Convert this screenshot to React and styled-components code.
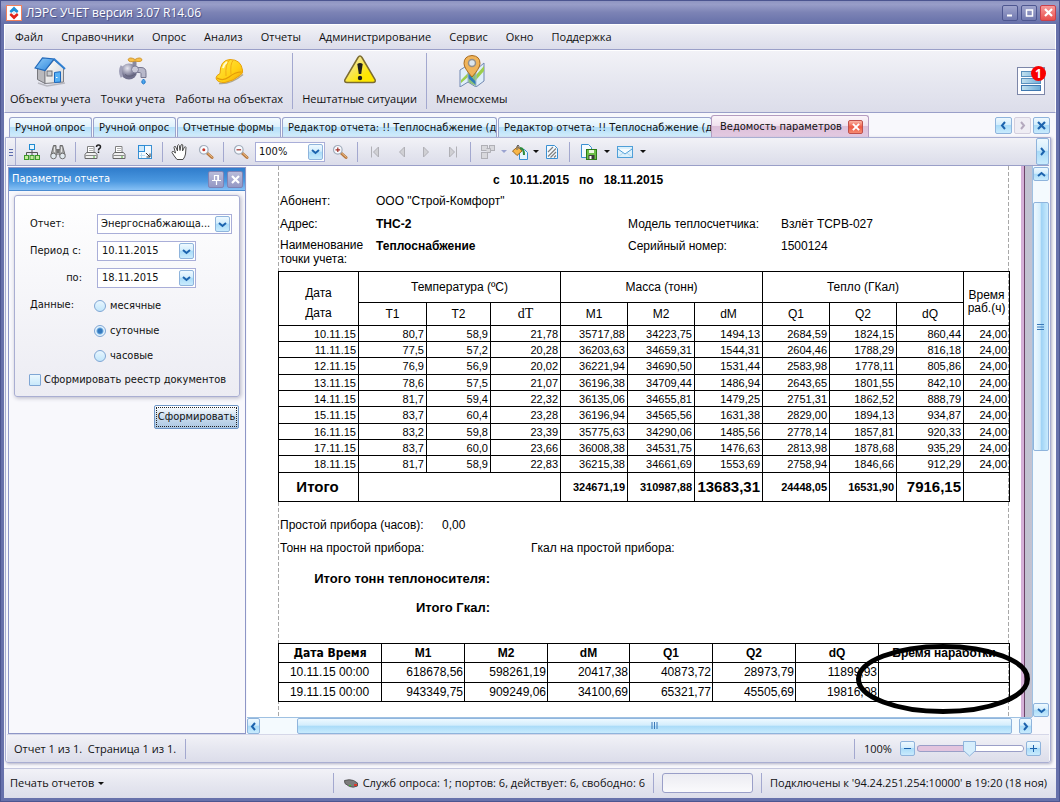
import React from "react";
import styled, { createGlobalStyle, css } from "styled-components";

const uiFont = `"Open Sans", "Noto Sans", sans-serif`;
const formFont = `"DejaVu Sans Condensed", "DejaVu Sans", sans-serif`;
const reportFont = `"Liberation Sans", Arial, sans-serif`;

const menu = [
  "Файл",
  "Справочники",
  "Опрос",
  "Анализ",
  "Отчеты",
  "Администрирование",
  "Сервис",
  "Окно",
  "Поддержка",
];

const tabs = [
  { text: "Ручной опрос", width: 83 },
  { text: "Ручной опрос", width: 83 },
  { text: "Отчетные формы", width: 104 },
  { text: "Редактор отчета: !! Теплоснабжение (д", width: 215 },
  { text: "Редактор отчета: !! Теплоснабжение (д", width: 214 },
];

const days = [
  ["10.11.15", "80,7", "58,9", "21,78", "35717,88", "34223,75", "1494,13", "2684,59", "1824,15", "860,44", "24,00"],
  ["11.11.15", "77,5", "57,2", "20,28", "36203,63", "34659,31", "1544,31", "2604,46", "1788,29", "816,18", "24,00"],
  ["12.11.15", "76,9", "56,9", "20,02", "36221,94", "34690,50", "1531,44", "2583,98", "1778,11", "805,86", "24,00"],
  ["13.11.15", "78,6", "57,5", "21,07", "36196,38", "34709,44", "1486,94", "2643,65", "1801,55", "842,10", "24,00"],
  ["14.11.15", "81,7", "59,4", "22,32", "36135,06", "34655,81", "1479,25", "2751,31", "1862,52", "888,79", "24,00"],
  ["15.11.15", "83,7", "60,4", "23,28", "36196,94", "34565,56", "1631,38", "2829,00", "1894,13", "934,87", "24,00"],
  ["16.11.15", "83,2", "59,8", "23,39", "35775,63", "34290,06", "1485,56", "2778,14", "1857,81", "920,33", "24,00"],
  ["17.11.15", "83,7", "60,0", "23,66", "36008,38", "34531,75", "1476,63", "2813,98", "1878,68", "935,29", "24,00"],
  ["18.11.15", "81,7", "58,9", "22,83", "36215,38", "34661,69", "1553,69", "2758,94", "1846,66", "912,29", "24,00"],
];

const counters = [
  ["10.11.15 00:00", "618678,56", "598261,19", "20417,38", "40873,72", "28973,79", "11899,93", ""],
  ["19.11.15 00:00", "943349,75", "909249,06", "34100,69", "65321,77", "45505,69", "19816,08", ""],
];

const dayCols = [80, 68, 64, 70, 67, 67, 68, 67, 67, 67, 46];
const counterCols = [103, 83, 83, 82, 83, 83, 83, 131];

/* ---------- icons ---------- */

const LogoIcon = () => (
  <svg width="16" height="16" viewBox="0 0 16 16">
    <rect x="0.5" y="0.5" width="15" height="15" fill="#fff" stroke="#f0805c" />
    <path d="M8 1.5 12.5 6 11 8 8 6 5 8 3.500 6z" fill="#1f8fd6" />
    <path d="M8 14.500 12.500 10 11 8 8 10.500 5 8 3.500 10z" fill="#e2231a" />
    <path d="M6 8 8 6.500 10 8 8 9.500z" fill="#dfe8f0" />
  </svg>
);

const HouseIcon = () => (
  <svg width="32" height="32" viewBox="0 0 32 32">
    <defs>
      <linearGradient id="wall" x1="0" y1="0" x2="1" y2="1">
        <stop offset="0" stopColor="#fff" />
        <stop offset="1" stopColor="#d4d4d4" />
      </linearGradient>
      <linearGradient id="roof" x1="0" y1="0" x2="1" y2="1">
        <stop offset="0" stopColor="#8fcbf8" />
        <stop offset="1" stopColor="#2f87dd" />
      </linearGradient>
    </defs>
    <path d="M4 28l9 3 18-3" stroke="#b8b8c0" strokeWidth="1.500" fill="none" />
    <path d="M3.500 13v11.500L11 28.500V14z" fill="#b9b9bd" stroke="#77777c" />
    <path d="M11 15.500L20 5l9.500 8V27L11 28.500z" fill="url(#wall)" stroke="#808086" />
    <path d="M1 13L8.500 3 20 4 11 15.500z" fill="url(#roof)" stroke="#2068ba" strokeWidth="1.200" />
    <path d="M20 4l11 10" stroke="#2f7fd2" strokeWidth="2" />
    <rect x="13" y="16" width="5" height="5" fill="#c8ccd0" stroke="#6e6e74" />
    <path d="M20.500 17.500l6-.8v10.300l-6 .5z" fill="#55b0f4" stroke="#1c68be" />
    <path d="M22 22.500h1.500" stroke="#fff" />
  </svg>
);

const TapIcon = () => (
  <svg width="32" height="32" viewBox="0 0 32 32">
    <defs>
      <radialGradient id="ball" cx="0.4" cy="0.3">
        <stop offset="0" stopColor="#e6e6f0" />
        <stop offset="1" stopColor="#70708c" />
      </radialGradient>
    </defs>
    <path d="M17.500 5v8" stroke="#8a8a9f" strokeWidth="4" />
    <path d="M18 12.500h6q5 0 5 5v5h-5v-4q0-1-2-1h-5z" fill="#b8b8ca" stroke="#77778f" />
    <circle cx="12" cy="16.500" r="8" fill="url(#ball)" />
    <path d="M5 11q-3 5 0 11" stroke="#a0a0b8" strokeWidth="3" fill="none" />
    <path d="M8 19.500q5 4 11-1" stroke="#62627a" fill="none" />
    <circle cx="18" cy="14.500" r="3.500" fill="#c9c9d8" stroke="#80809a" />
    <path d="M11 4.500q2-3 7 0 5-3 7 0 0 3-7 1.500-6 2-7-1.500z" fill="#f8c04a" stroke="#d09428" />
    <path d="M26.500 24q3.500 3.500 0 5-3.500-1.500 0-5z" fill="#4ba6ee" stroke="#2277c8" />
  </svg>
);

const HelmetIcon = () => (
  <svg width="32" height="32" viewBox="0 0 32 32">
    <defs>
      <linearGradient id="helmet" x1="0" y1="0" x2="1" y2="1">
        <stop offset="0" stopColor="#ffe94a" />
        <stop offset="0.600" stopColor="#ffd012" />
        <stop offset="1" stopColor="#f09a0a" />
      </linearGradient>
    </defs>
    <path d="M6 28.500q12 1 24-9" stroke="#b0a890" strokeWidth="1.500" fill="none" />
    <path
      d="M3 23q0-2.500 4-4.500Q7 5 17 4.500 28 4.500 29.500 15q1 3-2 5-7 6-15.500 7.500-8 .5-9-4.500z"
      fill="url(#helmet)"
      stroke="#e7a00c"
    />
    <path d="M4 23q6 3.500 12-1 6-5 12.500-5" stroke="#e39a08" strokeWidth="1.200" fill="none" />
    <path d="M13 21Q12 9 17 4.500M18 19.500Q17 9 20 5.500" stroke="#f2ac14" fill="none" />
    <path d="M10 13q1-4 4-6" stroke="#fffbd0" strokeWidth="2" fill="none" />
  </svg>
);

const WarningIcon = () => (
  <svg width="32" height="32" viewBox="0 0 32 32">
    <defs>
      <linearGradient id="warn" x1="0" y1="0" x2="1" y2="1">
        <stop offset="0.200" stopColor="#f3e6a0" />
        <stop offset="0.700" stopColor="#ffe800" />
      </linearGradient>
    </defs>
    <path
      d="M14 2.500q2-3 4 0l13 22q1 3-2 3H3q-3 0-2-3z"
      fill="url(#warn)"
      stroke="#7c6c30"
      strokeWidth="1.500"
    />
    <path d="M13.300 9q2.700-2 5.400 0l-1.500 10h-2.400z" fill="#1f1f1f" />
    <circle cx="16" cy="23" r="2.200" fill="#1f1f1f" />
  </svg>
);

const MapIcon = () => (
  <svg width="32" height="32" viewBox="0 0 32 32">
    <path d="M4 15l8-5 9 4 7-6v18l-8 6-8-5-8 5z" fill="#dfeefa" stroke="#7187b0" />
    <path d="M12 11v16l8 4V14z" fill="#8cc07a" />
    <path d="M5 25l7-7v4l-7 6zM20 20l8-9v5l-8 9z" fill="#9cce4c" />
    <path d="M12 18l8 9v3l-8-7z" fill="#2e7bb8" />
    <path d="M12 11v16M20 14v17" stroke="#9fb4d0" />
    <path d="M16 22Q8 13 8 8.500 8 1 16 0.500 24 1 24 8.500 24 13 16 22z" fill="#f0b45a" stroke="#a8691c" />
    <circle cx="16" cy="8" r="3.500" fill="#dce6ee" stroke="#94908c" strokeWidth="1.500" />
  </svg>
);

const NoticeIcon = () => (
  <svg width="28" height="28" viewBox="0 0 28 28">
    <defs>
      <linearGradient id="bar" x1="0" y1="0" x2="1" y2="0">
        <stop offset="0" stopColor="#c4e2ef" />
        <stop offset="1" stopColor="#6cabd8" />
      </linearGradient>
    </defs>
    <rect x="0.500" y="0.500" width="27" height="27" fill="#fdfdff" stroke="#7c86a8" />
    <rect x="4.500" y="4.500" width="19" height="5" fill="url(#bar)" stroke="#5a90bd" />
    <rect x="4.500" y="11.500" width="19" height="5" fill="url(#bar)" stroke="#5a90bd" />
    <rect x="4.500" y="18.500" width="19" height="5" fill="url(#bar)" stroke="#3f78b0" />
  </svg>
);

const Chevron = ({ dir = "down", color = "#1c63ae" }) => {
  const turn = { down: 0, left: 90, up: 180, right: 270 }[dir];
  return (
    <svg width="9" height="9" viewBox="0 0 9 9">
      <path
        d="M1 3l3.500 3L8 3"
        fill="none"
        stroke={color}
        strokeWidth="2"
        transform={`rotate(${turn} 4.500 4.500)`}
      />
    </svg>
  );
};

const Cross = ({ color = "#fff", size = 9 }) => (
  <svg width={size} height={size} viewBox="0 0 9 9">
    <path d="M1 1l7 7M8 1L1 8" stroke={color} strokeWidth="2.200" />
  </svg>
);

const PinIcon = () => (
  <svg width="9" height="11" viewBox="0 0 9 11">
    <path d="M2.500 1v5M6 1v5M2 1.500h5M0 6.500h9M4.500 7v4" stroke="#fff" strokeWidth="1.200" fill="none" />
    <path d="M5.500 1h1.500v5H5.500z" fill="#fff" />
  </svg>
);

const TreeIcon = () => (
  <svg width="16" height="16" viewBox="0 0 16 16">
    <path d="M8 6v3M2.500 11V8.500h11V11M8 8.500V11" stroke="#555" fill="none" />
    <rect x="5.500" y="0.500" width="5" height="5" fill="#e6f5fd" stroke="#1f8ad0" />
    <rect x="0.500" y="11.500" width="4" height="4" fill="#c4eb9c" stroke="#3c9a28" />
    <rect x="6" y="11.500" width="4" height="4" fill="#c4eb9c" stroke="#3c9a28" />
    <rect x="11.500" y="11.500" width="4" height="4" fill="#c4eb9c" stroke="#3c9a28" />
  </svg>
);

const BinocularsIcon = () => (
  <svg width="16" height="16" viewBox="0 0 16 16">
    <path d="M3.500 1.500h2.500v3l1 2.500v4H1z" fill="#a8a8a8" stroke="#6a6a6a" />
    <path d="M12.500 1.500H10v3L9 7v4h6z" fill="#a8a8a8" stroke="#6a6a6a" />
    <path d="M7 5h2v4H7z" fill="#777" />
    <path d="M4.500 3v5M11.500 3v5" stroke="#e4e4e4" />
    <circle cx="3.500" cy="12" r="2.800" fill="#e2eaf0" stroke="#707070" />
    <circle cx="12.500" cy="12" r="2.800" fill="#e2eaf0" stroke="#707070" />
  </svg>
);

const PrinterIcon = ({ ask }) => (
  <svg width={ask ? 18 : 14} height="16" viewBox={ask ? "0 0 18 16" : "0 0 14 16"}>
    <path d="M3.500 9V2.500h6.500V9" fill="#fff" stroke="#808080" />
    <path d="M5 4.500h4M5 6.500h4" stroke="#b4b4b4" />
    <path d="M2.500 8.500h9l1.500 2v4H1v-4z" fill="#f0f0f0" stroke="#666" />
    <path d="M1.500 11.500h11" stroke="#8a8a8a" />
    <path d="M9 13h2" stroke="#4caf30" />
    {ask && (
      <path
        d="M12.500 3q0-2 2-2t2 2q0 1-1 1.500t-1 2M14.500 7.500V9"
        stroke="#222"
        strokeWidth="1.500"
        fill="none"
      />
    )}
  </svg>
);

const PageSetupIcon = () => (
  <svg width="16" height="16" viewBox="0 0 16 16">
    <rect x="1.500" y="1.500" width="13" height="13" fill="#f3faff" stroke="#3a90d2" />
    <rect x="1.500" y="1.500" width="6" height="6" fill="#cfe9fa" stroke="#2b8cd6" />
    <path d="M3 11.500h5M4.500 9v5" stroke="#b8dcf2" fill="none" />
    <path d="M9 9l3.500 3.500M13 9.500V13H9.500" stroke="#333" fill="none" />
  </svg>
);

const HandIcon = () => (
  <svg width="18" height="18" viewBox="0 0 18 18">
    <path
      d="M6 16.500Q3 13 1 9.500q0-1.500 1.500-1L4.500 10 3 4.500q0-1.500 1.500-1L6.500 8 6.500 2.500q.8-1.700 1.800 0L9 7.500 10 2q1-1.200 1.800 0L11.500 8l2-4q1.200-.8 1.500.5L14.500 11q-.5 3-2.500 5.500z"
      fill="#fff"
      stroke="#4a4a4a"
    />
  </svg>
);

const LensIcon = ({ mark }) => (
  <svg width="16" height="16" viewBox="0 0 16 16">
    <path d="M9 9l5 4.500" stroke="#b8763c" strokeWidth="3" strokeLinecap="round" />
    <path d="M9.500 9l5 4.500" stroke="#eec48e" />
    <circle cx="5.800" cy="5.800" r="4.300" fill="#f8fbff" stroke="#a3aebc" strokeWidth="1.200" />
    {mark === "dot" && <circle cx="5.800" cy="5.800" r="1.500" fill="#c8382c" />}
    {mark === "minus" && <path d="M3.500 5.800h4.600" stroke="#a03028" strokeWidth="1.200" />}
    {mark === "plus" && (
      <path d="M3.500 5.800h4.600M5.800 3.500v4.600" stroke="#a03028" strokeWidth="1.200" />
    )}
  </svg>
);

const StepIcon = ({ back, end }) => (
  <svg width="10" height="12" viewBox="0 0 10 12">
    <g transform={back ? undefined : "matrix(-1 0 0 1 10 0)"}>
      <path d="M8.500 1v10L3.500 6z" fill="#d0d0d4" stroke="#b0b0b6" />
      {end && <path d="M1.500 0.500v11" stroke="#b0b0b6" />}
    </g>
  </svg>
);

const AlignIcon = () => (
  <svg width="14" height="16" viewBox="0 0 14 16">
    <g fill="#d8d8dc" stroke="#b0b0b6">
      <rect x="0.500" y="1.500" width="6" height="5" />
      <rect x="8.500" y="1.500" width="5" height="5" />
      <rect x="0.500" y="8.500" width="6" height="6" />
      <path d="M5.500 4.500h4v4h-4" />
    </g>
  </svg>
);

const FillIcon = () => (
  <svg width="16" height="16" viewBox="0 0 16 16">
    <path d="M7.500 5.500h5l3 3v7h-8z" fill="#e8f5fd" stroke="#3a90d2" />
    <path d="M0.500 7l5.500-4.500L10 7l-5 4.500z" fill="#f7b648" stroke="#9a6820" />
    <path d="M5 6V2q1-2 2 0v3" stroke="#666" fill="none" />
    <path d="M8 4q4 0 4 7" stroke="#2e8b3d" strokeWidth="2" fill="none" />
  </svg>
);

const HatchIcon = () => (
  <svg width="14" height="16" viewBox="0 0 14 16">
    <path d="M1.500 1.500h8l3 3v10h-11z" fill="#f4faff" stroke="#3a90d2" />
    <path d="M3 8l5-5M3 12.500l8-8M5.500 13.500L11 8M9 13.500l2-2" stroke="#808080" strokeWidth="1.200" />
  </svg>
);

const SaveIcon = () => (
  <svg width="18" height="18" viewBox="0 0 18 18">
    <path d="M1.500 1.500h7l3 3v10h-10z" fill="#f3faff" stroke="#3a90d2" />
    <rect x="6.500" y="6.500" width="10" height="10" fill="#6cbf48" stroke="#2c7a18" />
    <rect x="9" y="7" width="5" height="3" fill="#eaf8e0" />
    <rect x="8.500" y="12" width="6" height="4" fill="#3c3c3c" />
    <rect x="9.500" y="13" width="2" height="3" fill="#fff" />
  </svg>
);

const MailIcon = () => (
  <svg width="16" height="12" viewBox="0 0 16 12">
    <rect x="0.500" y="0.500" width="15" height="11" fill="#dcf0fb" stroke="#4f9fd8" />
    <path d="M1 3l7 5 7-5" stroke="#4f9fd8" fill="#f6fcff" />
    <path d="M1 11l5-4M15 11l-5-4" stroke="#b4d8ee" />
  </svg>
);

const DeviceIcon = () => (
  <svg width="14" height="9" viewBox="0 0 14 9">
    <path d="M0.500 1.500q5-1.500 9 0L13.500 4v3q-4 2-8 0.500L1 4.500z" fill="#7c7c7c" stroke="#555" />
    <rect x="5" y="6" width="2" height="1" fill="#38c030" />
    <rect x="10" y="5" width="3" height="2" fill="#e0382a" />
  </svg>
);

const Ellipse = () => (
  <svg width="176" height="72" viewBox="0 0 176 72">
    <ellipse cx="88" cy="36" rx="84.500" ry="32.500" fill="none" stroke="#000" strokeWidth="5" />
  </svg>
);

/* ---------- page ---------- */

const Combo = ({ id, width, children }) => (
  <ComboBox $width={width}>
    <select id={id} aria-label={id}>
      <option>{children}</option>
    </select>
    <ComboArrow>
      <Chevron />
    </ComboArrow>
  </ComboBox>
);

const ParamsPanel = () => (
  <Panel>
    <PanelHead>
      <h2>Параметры отчета</h2>
      <HeadButton type="button" aria-label="Закрепить">
        <PinIcon />
      </HeadButton>
      <HeadButton type="button" aria-label="Закрыть">
        <Cross />
      </HeadButton>
    </PanelHead>
    <PanelBody>
      <Group>
        <Fields>
          <label htmlFor="report">Отчет:</label>
          <Combo id="report">Энергоснабжающа...</Combo>
          <label htmlFor="from">Период с:</label>
          <DateBox>
            <input id="from" type="text" defaultValue="10.11.2015" />
            <button type="button" aria-label="Выбрать дату">
              <Chevron />
            </button>
          </DateBox>
          <EndLabel htmlFor="to">по:</EndLabel>
          <DateBox>
            <input id="to" type="text" defaultValue="18.11.2015" />
            <button type="button" aria-label="Выбрать дату">
              <Chevron />
            </button>
          </DateBox>
          <TopLabel>Данные:</TopLabel>
          <Radios>
            <label>
              <input type="radio" name="data" /> месячные
            </label>
            <label>
              <input type="radio" name="data" defaultChecked /> суточные
            </label>
            <label>
              <input type="radio" name="data" /> часовые
            </label>
          </Radios>
        </Fields>
        <Check>
          <input type="checkbox" /> Сформировать реестр документов
        </Check>
      </Group>
      <Submit type="button">
        <span>Сформировать</span>
      </Submit>
    </PanelBody>
  </Panel>
);

const ReportToolbar = () => (
  <ToolStrip>
    <Grip />
    <Tools>
      <Tool aria-label="Структура"><TreeIcon /></Tool>
      <Tool aria-label="Найти"><BinocularsIcon /></Tool>
      <Divider />
      <Tool aria-label="Печать с настройкой"><PrinterIcon ask /></Tool>
      <Tool aria-label="Печать"><PrinterIcon /></Tool>
      <Tool aria-label="Параметры страницы"><PageSetupIcon /></Tool>
      <Divider />
      <Tool aria-label="Перемещение"><HandIcon /></Tool>
      <Tool aria-label="Масштаб"><LensIcon mark="dot" /></Tool>
      <Divider />
      <Tool aria-label="Уменьшить"><LensIcon mark="minus" /></Tool>
      <Combo id="scale" width={70}>100%</Combo>
      <Tool aria-label="Увеличить"><LensIcon mark="plus" /></Tool>
      <Divider />
      <Tool aria-label="Первая"><StepIcon back end /></Tool>
      <Tool aria-label="Предыдущая"><StepIcon back /></Tool>
      <Tool aria-label="Следующая"><StepIcon /></Tool>
      <Tool aria-label="Последняя"><StepIcon end /></Tool>
      <Divider />
      <Tool aria-label="Поля"><AlignIcon /></Tool>
      <Drop $off />
      <Tool aria-label="Цвет"><FillIcon /></Tool>
      <Drop />
      <Tool aria-label="Водяной знак"><HatchIcon /></Tool>
      <Divider />
      <Tool aria-label="Сохранить" $wide><SaveIcon /></Tool>
      <Drop />
      <Tool aria-label="Отправить" $wide><MailIcon /></Tool>
      <Drop />
    </Tools>
    <MoreButton type="button" aria-label="Еще">
      <Chevron dir="right" />
    </MoreButton>
  </ToolStrip>
);

const Report = () => (
  <Sheet>
    <Period>с&nbsp;&nbsp; 10.11.2015 &nbsp;&nbsp;по&nbsp;&nbsp; 18.11.2015</Period>
    <Info>
      <span>Абонент:</span>
      <span>ООО "Строй-Комфорт"</span>
      <i />
      <i />
      <span>Адрес:</span>
      <b>ТНС-2</b>
      <span>Модель теплосчетчика:</span>
      <span>Взлёт ТСРВ-027</span>
      <TwoLines>
        Наименование
        <br />
        точки учета:
      </TwoLines>
      <b>Теплоснабжение</b>
      <span>Серийный номер:</span>
      <span>1500124</span>
    </Info>
    <DayTable>
      <colgroup>
        {dayCols.map((w, i) => (
          <col key={i} width={w} />
        ))}
      </colgroup>
      <thead>
        <tr>
          <DateHead rowSpan="2">
            Дата
            <br />
            Дата
          </DateHead>
          <th colSpan="3">Температура (ºC)</th>
          <th colSpan="3">Масса (тонн)</th>
          <th colSpan="3">Тепло (ГКал)</th>
          <HoursHead rowSpan="2">
            Время
            <br />
            раб.(ч)
          </HoursHead>
        </tr>
        <tr>
          <th>T1</th>
          <th>T2</th>
          <SerifHead>dT</SerifHead>
          <th>M1</th>
          <th>M2</th>
          <th>dM</th>
          <th>Q1</th>
          <th>Q2</th>
          <th>dQ</th>
        </tr>
      </thead>
      <tbody>
        {days.map((row) => (
          <tr key={row[0]}>
            {row.map((cell, i) => (
              <td key={i}>{cell}</td>
            ))}
          </tr>
        ))}
      </tbody>
      <tfoot>
        <tr>
          <Total $big $center>Итого</Total>
          <Total colSpan="3" />
          <Total>324671,19</Total>
          <Total>310987,88</Total>
          <Total $big>13683,31</Total>
          <Total>24448,05</Total>
          <Total>16531,90</Total>
          <Total $big>7916,15</Total>
          <Total />
        </tr>
      </tfoot>
    </DayTable>
    <Idle>
      <IdleName>Простой прибора (часов):</IdleName>
      <span>0,00</span>
    </Idle>
    <Idle>
      <IdleName $wide>Тонн на простой прибора:</IdleName>
      <span>Гкал на простой прибора:</span>
    </Idle>
    <Sums>
      <p>Итого тонн теплоносителя:</p>
      <p>Итого Гкал:</p>
    </Sums>
    <CounterWrap>
      <CounterTable>
        <colgroup>
          {counterCols.map((w, i) => (
            <col key={i} width={w} />
          ))}
        </colgroup>
        <thead>
          <tr>
            <FormHead>Дата Время</FormHead>
            <th>M1</th>
            <th>M2</th>
            <th>dM</th>
            <th>Q1</th>
            <th>Q2</th>
            <th>dQ</th>
            <th>Время наработки</th>
          </tr>
        </thead>
        <tbody>
          {counters.map((row) => (
            <tr key={row[0]}>
              {row.map((cell, i) => (
                <td key={i}>{cell}</td>
              ))}
            </tr>
          ))}
        </tbody>
      </CounterTable>
      <Mark>
        <Ellipse />
      </Mark>
    </CounterWrap>
  </Sheet>
);

const App = () => {
  return (
    <>
      <Global />
      <Frame>
        <TitleBar>
          <LogoIcon />
          <h1>ЛЭРС УЧЕТ версия 3.07 R14.06</h1>
          <WinButton type="button" aria-label="Свернуть">
            <svg width="9" height="9"><path d="M1 7.500h5" stroke="#fff" strokeWidth="2" /></svg>
          </WinButton>
          <WinButton type="button" aria-label="Развернуть">
            <svg width="9" height="9">
              <path d="M1.500 2v6h6V2zM1 2h7" fill="none" stroke="#fff" strokeWidth="1.500" />
            </svg>
          </WinButton>
          <WinButton type="button" aria-label="Закрыть" $close>
            <Cross />
          </WinButton>
        </TitleBar>
        <Inner>
          <MenuBar>
            {menu.map((item) => (
              <a href="#" key={item}>
                {item}
              </a>
            ))}
          </MenuBar>
          <MainBar>
            <BigTool type="button"><HouseIcon />Объекты учета</BigTool>
            <BigTool type="button"><TapIcon />Точки учета</BigTool>
            <BigTool type="button"><HelmetIcon />Работы на объектах</BigTool>
            <BigDivider />
            <BigTool type="button"><WarningIcon />Нештатные ситуации</BigTool>
            <BigDivider />
            <BigTool type="button"><MapIcon />Мнемосхемы</BigTool>
            <Notice type="button" aria-label="Уведомления">
              <NoticeIcon />
              <Badge>1</Badge>
            </Notice>
          </MainBar>
          <TabBar>
            {tabs.map((tab, i) => (
              <Tab type="button" key={i} $width={tab.width}>
                <span>{tab.text}</span>
              </Tab>
            ))}
            <ActiveTab>
              <button type="button">Ведомость параметров</button>
              <TabClose type="button" aria-label="Закрыть вкладку">
                <Cross size={8} />
              </TabClose>
            </ActiveTab>
            <TabNav>
              <NavButton type="button" aria-label="Назад"><Chevron dir="left" /></NavButton>
              <NavButton type="button" aria-label="Вперед" disabled>
                <Chevron dir="right" color="#b4a9be" />
              </NavButton>
              <NavButton type="button" aria-label="Закрыть"><Cross color="#1c63ae" /></NavButton>
            </TabNav>
          </TabBar>
          <Doc>
            <ReportToolbar />
            <Work>
              <ParamsPanel />
              <Viewer>
                <Canvas>
                  <Paper>
                    <Report />
                  </Paper>
                </Canvas>
                <VScroll>
                  <ArrowUp type="button" aria-label="Вверх"><Chevron dir="up" /></ArrowUp>
                  <VGap />
                  <VThumb>
                    <svg width="8" height="8">
                      <path d="M0 1.500h7M0 4h7M0 6.500h7" stroke="#3a78b8" />
                    </svg>
                  </VThumb>
                  <VRest />
                  <ArrowUp type="button" aria-label="Вниз"><Chevron /></ArrowUp>
                </VScroll>
                <HScroll>
                  <ArrowSide type="button" aria-label="Влево"><Chevron dir="left" /></ArrowSide>
                  <HGap $width={37} />
                  <HThumb>
                    <svg width="7" height="8">
                      <path d="M1 0v7M3.500 0v7M6 0v7" stroke="#3a78b8" />
                    </svg>
                  </HThumb>
                  <HGap $width={7} />
                  <ArrowSide type="button" aria-label="Вправо"><Chevron dir="right" /></ArrowSide>
                </HScroll>
              </Viewer>
            </Work>
            <PageStatus>
              <PageInfo>Отчет 1 из 1.&nbsp; Страница 1 из 1.</PageInfo>
              <StatusDivider />
              <Spacer />
              <StatusDivider />
              <label htmlFor="zoom">100%</label>
              <SquareButton type="button" aria-label="Меньше">
                <svg width="9" height="9"><path d="M1 4.500h7" stroke="#1c63ae" /></svg>
              </SquareButton>
              <Slider id="zoom" type="range" min="0" max="100" defaultValue="49" />
              <SquareButton type="button" aria-label="Больше">
                <svg width="9" height="9"><path d="M1 4.500h7M4.500 1v7" stroke="#1c63ae" /></svg>
              </SquareButton>
            </PageStatus>
          </Doc>
          <Status>
            <PrintButton type="button">
              Печать отчетов <Drop as="i" />
            </PrintButton>
            <Spacer />
            <StatusDivider />
            <Poll>
              <DeviceIcon />
              Служб опроса: 1; портов: 6, действует: 6, свободно: 6
            </Poll>
            <StatusDivider />
            <Progress />
            <StatusDivider />
            <span>Подключены к '94.24.251.254:10000' в 19:20 (18 ноя)</span>
          </Status>
        </Inner>
      </Frame>
    </>
  );
};

export default App;

/* ---------- styles ---------- */

const Global = createGlobalStyle`
  * {
    box-sizing: border-box;
  }

  body {
    margin: 0;
    font: 11px/16px ${uiFont};
    color: #111;
  }

  button, input, select {
    font: inherit;
    color: inherit;
    margin: 0;
    padding: 0;
  }

  svg {
    display: block;
    flex: none;
  }
`;

const silver = css`
  background: linear-gradient(#f2f2f7, #e6e7f0 50%, #dcddea);
`;

const glass = css`
  background: linear-gradient(#eef9ff, #d3edfc 45%, #a9dbf8 50%, #c9ebfd);
  border: 1px solid #8fb4dc;
  border-radius: 2px;
  display: flex;
  align-items: center;
  justify-content: center;
`;

const Frame = styled.div`
  min-height: 100vh;
  display: flex;
  flex-direction: column;
  padding: 0 4px 4px;
  background: #6771ab;
  border: 1px solid #4c5590;
`;

const TitleBar = styled.header`
  height: 23px;
  margin: 0 -4px;
  padding: 0 3px 0 5px;
  display: flex;
  align-items: center;
  gap: 3px;
  background: linear-gradient(#8f95c1, #989dc8 15%, #7c83b5 50%, #6670a9);

  h1 {
    flex: 1;
    margin: 0 0 0 1px;
    font: 12px/18px ${uiFont};
    color: #fff;
    text-shadow: 1px 1px 1px #444c84;
  }
`;

const WinButton = styled.button`
  width: 16px;
  height: 16px;
  display: flex;
  align-items: center;
  justify-content: center;
  border: 1px solid ${(p) => (p.$close ? "#c9404c" : "#4d5690")};
  border-radius: 2px;
  background: ${(p) =>
    p.$close ? "linear-gradient(#f79a9a, #e8504c)" : "linear-gradient(#a0a5cd, #7179b0)"};
`;

const Inner = styled.div`
  flex: 1;
  display: flex;
  flex-direction: column;
  margin: 0 -1px -1px;
  background: #f8f8fc;
`;

const MenuBar = styled.nav`
  ${silver}
  height: 26px;
  display: flex;
  align-items: center;
  gap: 18px;
  padding: 0 10px;
  border: 1px solid #fff;
  border-bottom-color: #9a9fc8;

  a {
    color: inherit;
    text-decoration: none;
  }
`;

const MainBar = styled.div`
  ${silver}
  height: 63px;
  display: flex;
  align-items: stretch;
  gap: 10px;
  padding: 2px 10px 3px 5px;
  border: 1px solid #fff;
  border-bottom-color: #9a9fc8;
`;

const BigTool = styled.button`
  border: 0;
  background: none;
  display: flex;
  flex-direction: column;
  align-items: center;
  gap: 4px;
  padding-top: 2px;
  white-space: nowrap;
`;

const BigDivider = styled.i`
  width: 1px;
  margin: 0 -1px;
  background: #a3a8cf;
`;

const Notice = styled.button`
  position: relative;
  align-self: center;
  margin-left: auto;
  border: 0;
  background: none;
`;

const Badge = styled.span`
  position: absolute;
  top: -1px;
  right: -1px;
  width: 15px;
  height: 15px;
  border-radius: 50%;
  background: #f80000;
  color: #fff;
  font: bold 12px/15px ${uiFont};
  text-align: center;
`;

const TabBar = styled.div`
  height: 24px;
  display: flex;
  align-items: flex-end;
  gap: 1px;
  padding: 0 6px 0 5px;
  font: 11px/16px ${formFont};
`;

const Tab = styled.button`
  width: ${(p) => p.$width}px;
  height: 20px;
  padding: 0 0 0 5px;
  border: 1px solid #9aa3cc;
  border-bottom: 0;
  border-radius: 3px 3px 0 0;
  background: linear-gradient(#f4fbff, #dff2fd 45%, #b4dff8 50%, #d4eefc);

  span {
    display: block;
    overflow: hidden;
    white-space: nowrap;
    text-align: left;
  }
`;

const ActiveTab = styled.div`
  width: 158px;
  height: 22px;
  margin-left: -2px;
  padding: 0 5px 0 8px;
  display: flex;
  align-items: center;
  justify-content: space-between;
  border: 1px solid #b59cc0;
  border-bottom: 0;
  border-radius: 3px 3px 0 0;
  background: linear-gradient(#fbf5fa, #f1e2ef 45%, #dcbfd9 50%, #e4cbe2);

  > button:first-child {
    border: 0;
    background: none;
    white-space: nowrap;
  }
`;

const TabClose = styled.button`
  width: 15px;
  height: 14px;
  display: flex;
  align-items: center;
  justify-content: center;
  border: 1px solid #c0504c;
  border-radius: 2px;
  background: linear-gradient(#fbb4a4, #ee5a44 50%, #f68a70);
`;

const TabNav = styled.div`
  margin-left: auto;
  align-self: center;
  display: flex;
  gap: 2px;
`;

const NavButton = styled.button`
  ${glass}
  width: 17px;
  height: 17px;

  &:disabled {
    background: #efedf4;
    border-color: #d3cfde;
  }
`;

const Doc = styled.main`
  flex: 1;
  display: flex;
  flex-direction: column;
  margin: 0 5px 0 1px;
  border: 1px solid #a9aed2;
  border-radius: 0 0 3px 3px;
  box-shadow: 1px 1px 3px #b0b0c4;
  padding: 0 1px;
`;

const ToolStrip = styled.div`
  ${silver}
  height: 28px;
  display: flex;
  align-items: stretch;
  border-bottom: 1px solid #9a9fc8;
`;

const Grip = styled.i`
  width: 9px;
  background: repeating-linear-gradient(#5c6cae 0 1px, transparent 1px 3px) 2px 11px / 4px 7px
    no-repeat;
  border-right: 1px solid #a9aed2;
`;

const Tools = styled.div`
  flex: 1;
  display: flex;
  align-items: center;
  padding-left: 3px;

  select {
    padding-left: 4px;
  }
`;

const Tool = styled.button.attrs({ type: "button" })`
  width: ${(p) => (p.$wide ? 30 : 26)}px;
  height: 22px;
  border: 0;
  background: none;
  display: flex;
  align-items: center;
  justify-content: center;
`;

const Divider = styled.i`
  width: 1px;
  height: 20px;
  margin: 0 4px;
  background: #a3a8cf;
`;

const Drop = styled.i`
  display: inline-block;
  border: 3px solid transparent;
  border-top-color: ${(p) => (p.$off ? "#9aa3d0" : "#111")};
  border-bottom: 0;
`;

const MoreButton = styled.button`
  ${glass}
  width: 13px;
`;

const ComboBox = styled.span`
  position: relative;
  width: ${(p) => (p.$width ? `${p.$width}px` : "auto")};
  height: 20px;
  display: flex;
  border: 1px solid #a9aed8;
  background: #fff;

  ${Tools} > & {
    margin: 0 2px 0 1px;
  }

  select {
    flex: 1;
    min-width: 0;
    padding: 0 18px 0 3px;
    border: 0;
    outline: 0;
    background: none;
    appearance: none;
    font: 11px/18px ${formFont};
  }
`;

const ComboArrow = styled.i`
  ${glass}
  position: absolute;
  top: 1px;
  right: 1px;
  width: 15px;
  height: 16px;
  pointer-events: none;
`;

const DateBox = styled.span`
  width: 99px;
  height: 20px;
  display: flex;
  border: 1px solid #a9aed8;
  background: #fff;
  padding: 1px;

  input {
    flex: 1;
    min-width: 0;
    padding: 0 3px;
    border: 0;
    background: none;
  }

  button {
    ${glass}
    width: 15px;
  }
`;

const Work = styled.div`
  flex: 1;
  display: flex;
`;

const Panel = styled.aside`
  width: 238px;
  margin: 1px 1px 0;
  border: 1px solid #8e96c6;
  font: 11px/16px ${formFont};
`;

const PanelHead = styled.header`
  height: 23px;
  display: flex;
  align-items: center;
  gap: 3px;
  padding: 0 2px 0 3px;
  background: linear-gradient(#2f7ccb, #4b98e0 60%, #86c0f5);
  border-bottom: 1px solid #4a8bd0;

  h2 {
    flex: 1;
    margin: 0;
    font: inherit;
    color: #fff;
  }
`;

const HeadButton = styled.button`
  width: 16px;
  height: 17px;
  display: flex;
  align-items: center;
  justify-content: center;
  border: 1px solid #7f83b5;
  border-radius: 2px;
  background: linear-gradient(#b9bbd9, #9598c4);
`;

const PanelBody = styled.div`
  padding: 4px 5px;
  display: flex;
  flex-direction: column;
  align-items: flex-end;
`;

const Group = styled.div`
  width: 100%;
  height: 202px;
  padding: 18px 7px 0 15px;
  border: 1px solid #a9aed2;
  border-radius: 3px;
  background: linear-gradient(#fff, #ececf3);
  box-shadow: 1px 1px 4px #b4b4c4;
`;

const Fields = styled.div`
  display: grid;
  grid-template-columns: 52px 1fr;
  gap: 7px 15px;
  align-items: center;

  > label {
    white-space: nowrap;
  }
`;

const EndLabel = styled.label`
  text-align: right;
`;

const TopLabel = styled.span`
  align-self: start;
  padding-top: 2px;
`;

const Radios = styled.div`
  display: grid;
  gap: 9px;
  margin-left: -3px;
  padding-top: 3px;

  label {
    display: flex;
    align-items: center;
    gap: 4px;
  }

  input {
    appearance: none;
    width: 12px;
    height: 12px;
    border: 1px solid #7fa6d4;
    border-radius: 50%;
    background: linear-gradient(#e8f6fe, #c2e6fb);
  }

  input:checked {
    background: radial-gradient(circle, #3378bd 0 2px, #6ea9de 3px, #e4f4fe 4px);
  }
`;

const Check = styled.label`
  display: flex;
  align-items: center;
  gap: 3px;
  margin: 8px 0 0 -1px;
  white-space: nowrap;

  input {
    appearance: none;
    width: 12px;
    height: 12px;
    border: 1px solid #7fa6d4;
    border-radius: 1px;
    background: linear-gradient(#eaf7fe, #c9e9fb);
  }
`;

const Submit = styled.button`
  ${glass}
  width: 85px;
  height: 24px;
  margin: 8px 1px 0 0;
  padding: 1px;
  border-color: #6f97c8;
  background: linear-gradient(#fff, #cfe0f0 45%, #aac6e2);

  span {
    flex: 1;
    height: 100%;
    line-height: 18px;
    border: 1px dotted #222;
  }
`;

const Viewer = styled.section`
  flex: 1;
  min-width: 0;
  display: grid;
  grid-template: 1fr 17px / 1fr 17px;
`;

const Canvas = styled.div`
  min-width: 0;
  padding-right: 8px;
  background: linear-gradient(90deg, #b9b9c8 0 95%, #c3c3d2);
`;

const Paper = styled.div`
  height: 100%;
  padding: 0 12px 0 31px;
  background: #fff;
  border-right: 3px solid #d5b0d8;
  box-shadow: 1px 0 #6c4468;
`;

const Sheet = styled.article`
  --dash: repeating-linear-gradient(#a8a8a8 0 4px, #fff 4px 6px);
  height: 100%;
  padding: 6px 0 12px;
  background: var(--dash) left / 1px 100% no-repeat, var(--dash) right / 1px 100% no-repeat;
  font: 12px/16px ${reportFont};
  color: #000;
`;

const Period = styled.p`
  margin: 0 0 5px;
  padding-left: 215px;
  font-weight: bold;
`;

const Info = styled.div`
  display: grid;
  grid-template: 23px 22px 33px / 96px 252px 153px 1fr;
  padding-left: 2px;
  white-space: nowrap;
`;

const TwoLines = styled.span`
  line-height: 14px;
`;

const gridTable = css`
  width: 100%;
  table-layout: fixed;
  border-collapse: collapse;
  white-space: nowrap;

  th,
  td {
    padding: 0;
    border: 1px solid #000;
  }
`;

const DayTable = styled.table`
  ${gridTable}

  th {
    font-weight: normal;
    line-height: 20px;
  }

  thead tr:first-child {
    height: 31px;
  }

  thead tr:last-child {
    height: 23px;
  }

  tbody tr {
    height: 16px;
  }

  tbody tr:nth-child(3n) {
    height: 17px;
  }

  td {
    padding-right: 2px;
    text-align: right;
    font-size: 11px;
    line-height: 14px;
  }

  tfoot tr {
    height: 29px;
  }
`;

const DateHead = styled.th`
  && {
    padding-top: 8px;
  }
`;

const HoursHead = styled.th`
  && {
    line-height: 13px;
    padding-top: 6px;
  }
`;

const SerifHead = styled.th`
  font: 14px "Liberation Serif", serif;
`;

const Total = styled.td`
  && {
    font-weight: bold;
    font-size: ${(p) => (p.$big ? 15 : 11)}px;
    text-align: ${(p) => (p.$center ? "center" : "right")};
  }
`;

const Idle = styled.div`
  display: flex;
  padding-left: 2px;
  line-height: 23px;

  ${DayTable} + & {
    margin-top: 12px;
  }
`;

const IdleName = styled.span`
  width: ${(p) => (p.$wide ? 251 : 162)}px;
`;

const Sums = styled.div`
  width: 212px;
  padding: 4px 0 21px;
  text-align: right;
  font-weight: bold;
  font-size: 13px;
  line-height: 29px;
  white-space: nowrap;

  p {
    margin: 0;
  }
`;

const CounterWrap = styled.div`
  position: relative;
`;

const CounterTable = styled.table`
  ${gridTable}

  tr {
    height: 20px;
  }

  thead tr,
  tr:last-child {
    height: 19px;
  }

  th,
  td {
    line-height: 17px;
  }

  td {
    padding-right: 1px;
    text-align: right;
  }

  td:first-child {
    text-align: center;
  }
`;

const FormHead = styled.th`
  font: bold 12px ${formFont};
`;

const Mark = styled.div`
  position: absolute;
  top: 0;
  right: -22px;
`;

const VScroll = styled.div`
  display: flex;
  flex-direction: column;
  padding-top: 1px;
  background: #f4fafe;
  border-left: 1px solid #9fc1e2;
`;

const ArrowUp = styled.button`
  ${glass}
  height: 14px;
`;

const VGap = styled.i`
  height: 21px;
`;

const VThumb = styled.div`
  ${glass}
  flex: 248;
  background: linear-gradient(90deg, #eef9ff, #d3edfc 45%, #9dd2f5 50%, #c9ebfd);
`;

const VRest = styled.i`
  flex: 253;
`;

const HScroll = styled.div`
  display: flex;
  border-top: 1px solid #9fc1e2;
  background: #f4fafe;
`;

const ArrowSide = styled.button`
  ${glass}
  width: 13px;
`;

const HGap = styled.i`
  width: ${(p) => p.$width}px;
`;

const HThumb = styled.div`
  ${glass}
  flex: 1;
`;

const PageStatus = styled.footer`
  ${silver}
  height: 28px;
  display: flex;
  align-items: center;
  padding: 0 8px 0 7px;
  border-top: 1px solid #d5d7e8;

  label {
    width: 36px;
    margin-left: 9px;
  }
`;

const PageInfo = styled.span`
  padding-right: 9px;
`;

const StatusDivider = styled.i`
  width: 1px;
  height: 20px;
  background: #a3a8cf;
`;

const Spacer = styled.i`
  flex: 1;
`;

const SquareButton = styled.button`
  ${glass}
  width: 15px;
  height: 15px;
`;

const Slider = styled.input`
  appearance: none;
  width: 107px;
  height: 18px;
  margin: 0 2px;
  background: linear-gradient(90deg, #e2c4de 50%, #fff 50%) center / 100% 5px no-repeat;

  &::-webkit-slider-runnable-track {
    height: 7px;
    border: 1px solid #9a9fc8;
    border-radius: 3px;
  }

  &::-webkit-slider-thumb {
    appearance: none;
    width: 13px;
    height: 17px;
    margin-top: -6px;
    background: url("data:image/svg+xml,%3Csvg xmlns='http://www.w3.org/2000/svg' width='13' height='17'%3E%3Cpath d='M.5 1.500h12v9l-6 5.500-6-5.500z' fill='%23d6eefc' stroke='%238fb4dc'/%3E%3C/svg%3E");
  }
`;

const Status = styled.footer`
  ${silver}
  height: 30px;
  margin-top: 5px;
  display: flex;
  align-items: center;
  gap: 8px;
  padding: 0 9px 1px 6px;
  border-top: 1px solid #c3c6de;
`;

const PrintButton = styled.button`
  border: 0;
  background: none;
  display: flex;
  align-items: center;
  gap: 4px;
`;

const Poll = styled.span`
  display: flex;
  align-items: center;
  gap: 5px;
  padding-left: 2px;
`;

const Progress = styled.div`
  width: 91px;
  height: 20px;
  border: 1px solid #9a9fc8;
  border-radius: 3px;
  background: linear-gradient(#ececf2, #fafafc);
`;
